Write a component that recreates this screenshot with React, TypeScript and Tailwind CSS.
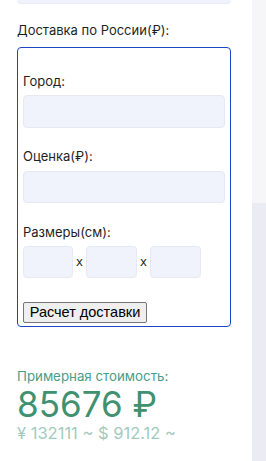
import React from "react";

export default function App() {
  const font = { fontFamily: "Inter, 'Noto Sans', sans-serif" } as React.CSSProperties;
  return (
    <div className="flex h-[461px] w-[266px] overflow-hidden bg-white" style={font}>
      <div className="flex w-[252px] flex-col bg-white px-[17px]">
        <div className="mx-[0px] h-[4px] w-[214px] rounded-b-[4px] border-b border-[#e8ebf5] bg-[#f0f3fb]" />
        <div className="mt-[18px] text-[13px] leading-[16px] text-[#1f1f1f]">Доставка по России(₽):</div>
        <div className="mt-[9px] flex h-[280px] w-[214px] flex-col rounded-[4px] border border-[#1b46c4] px-[5px] pt-[25px]">
          <div className="text-[13px] leading-[16px] text-[#1f1f1f]">Город:</div>
          <input className="mt-[6px] h-[33px] w-[202px] rounded-[4px] border border-[#e6e9f3] bg-[#f0f3fb] outline-none" />
          <div className="mt-[20px] text-[13px] leading-[16px] text-[#1f1f1f]">Оценка(₽):</div>
          <input className="mt-[7px] h-[32px] w-[202px] rounded-[4px] border border-[#e6e9f3] bg-[#f0f3fb] outline-none" />
          <div className="mt-[21px] text-[13px] leading-[16px] text-[#1f1f1f]">Размеры(см):</div>
          <div className="mt-[6px] flex items-center">
            <input className="h-[32px] w-[50px] rounded-[4px] border border-[#e6e9f3] bg-[#f0f3fb] outline-none" />
            <span className="w-[13px] text-center text-[13px] leading-[16px] text-[#1f1f1f]" style={{ fontFamily: "'Liberation Sans', Arial, sans-serif" }}>x</span>
            <input className="h-[32px] w-[51px] rounded-[4px] border border-[#e6e9f3] bg-[#f0f3fb] outline-none" />
            <span className="w-[13px] text-center text-[13px] leading-[16px] text-[#1f1f1f]" style={{ fontFamily: "'Liberation Sans', Arial, sans-serif" }}>x</span>
            <input className="h-[32px] w-[51px] rounded-[4px] border border-[#e6e9f3] bg-[#f0f3fb] outline-none" />
          </div>
          <div className="mt-[21px]">
            <button
              className="h-[21px] w-[124px] whitespace-nowrap rounded-[2px] border border-[#767676] bg-[#efefef] px-0 text-[14.5px] leading-[17px] text-black"
              style={{ fontFamily: "'Liberation Sans', Arial, sans-serif" }}
            >
              Расчет доставки
            </button>
          </div>
        </div>
        <div className="mt-[41px] text-[13.3px] leading-[16px] text-[#4a9d88]">Примерная стоимость:</div>
        <div className="mt-[1px] text-[35px] leading-[38px] text-[#3f9170]">85676 ₽</div>
        <div className="mt-[1px] text-[16.5px] leading-[18px] text-[#a3cbbd]">¥ 132111 ~ $ 912.12 ~</div>
      </div>
      <div className="flex w-[14px] flex-col">
        <div className="h-[203px] bg-[#f6f6f8]" />
        <div className="flex-1 bg-[#ebebf4]" />
      </div>
    </div>
  );
}
